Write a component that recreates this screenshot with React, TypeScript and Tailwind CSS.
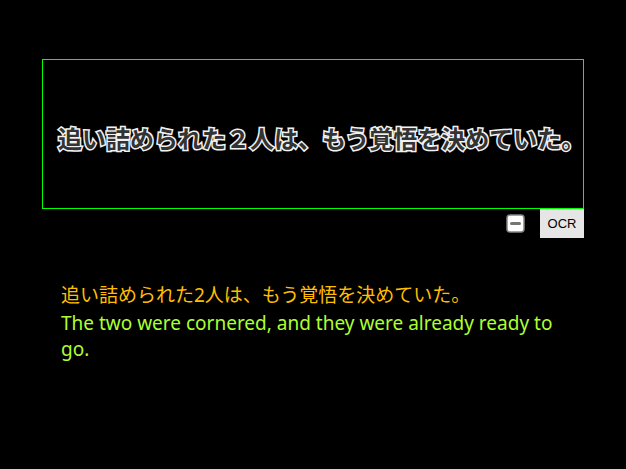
export default function App() {
  return (
    <main className="min-h-screen bg-black px-[42px] pt-[59px] font-['Noto_Sans','Noto_Sans_CJK_JP',sans-serif]">
      <section className="flex h-[150px] items-center border border-[#00ff00] px-[15px] pt-[7px]">
        <p className="whitespace-nowrap font-['Noto_Sans_CJK_JP',sans-serif] text-[24px] font-bold leading-[32px] text-[#333333] [-webkit-text-stroke:3px_#f2f2f2] [paint-order:stroke_fill] [stroke-linejoin:round]" lang="ja">
          追い詰められた２人は、もう覚悟を決めていた。
        </p>
      </section>
      <div className="flex items-center justify-end gap-[15px]">
        <button type="button" aria-label="Collapse" className="flex size-[19px] items-center justify-center">
          <svg viewBox="0 0 19 19" className="size-full" fill="none">
            <rect x="1" y="1" width="17" height="17" rx="3" fill="white" stroke="#858585" strokeWidth="1.5" />
            <path d="M5.5 9.5H13.5" stroke="#767676" strokeWidth="3" strokeLinecap="round" />
          </svg>
        </button>
        <button type="button" className="h-[29px] w-[44px] bg-[#e6e6e6] font-['Liberation_Sans',sans-serif] text-[13px] text-black">OCR</button>
      </div>
      <section className="px-[19px] pt-[43px] text-[19px]">
        <p className="pb-[1px] leading-[28px] text-[#ffbf00]" lang="ja">追い詰められた2人は、もう覚悟を決めていた。</p>
        <p className="leading-[26px] text-[#adff2f]">The two were cornered, and they were already ready to go.</p>
      </section>
    </main>
  );
}
